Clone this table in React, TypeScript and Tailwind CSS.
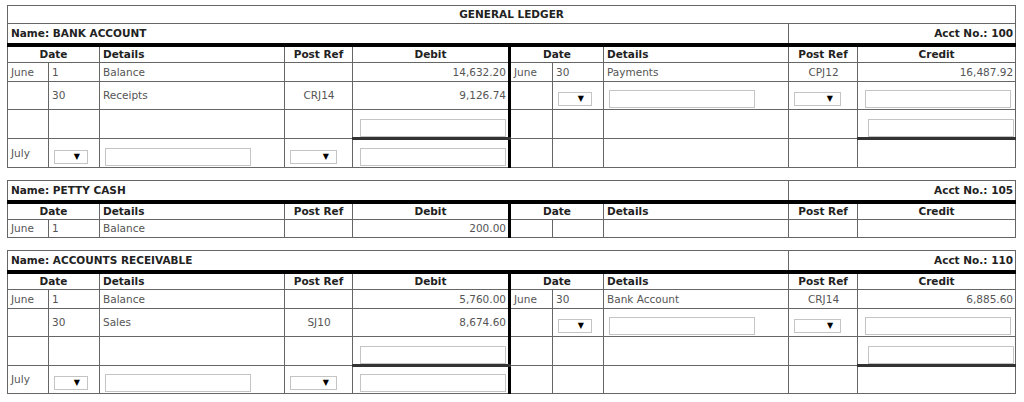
import React from "react";

type Cell = string | { kind: "sel"; wide?: boolean } | { kind: "inp"; thick?: boolean; shift?: boolean };

type Row = { h: string; cells: Cell[] };

type Ledger = { title?: string; name: string; acct: string; rows: Row[] };

const SEL: Cell = { kind: "sel" };
const SELW: Cell = { kind: "sel", wide: true };
const INP: Cell = { kind: "inp" };

const ledgers: Ledger[] = [
  {
    title: "GENERAL LEDGER",
    name: "BANK ACCOUNT",
    acct: "100",
    rows: [
      { h: "h-[19px]", cells: ["June", "1", "Balance", "", "14,632.20", "June", "30", "Payments", "CPJ12", "16,487.92"] },
      { h: "h-[28px]", cells: ["", "30", "Receipts", "CRJ14", "9,126.74", "", SEL, INP, SELW, INP] },
      { h: "h-[29px]", cells: ["", "", "", "", { kind: "inp", thick: true }, "", "", "", "", { kind: "inp", thick: true, shift: true }] },
      { h: "h-[29px]", cells: ["July", SEL, INP, SELW, INP, "", "", "", "", ""] },
    ],
  },
  {
    name: "PETTY CASH",
    acct: "105",
    rows: [{ h: "h-[18px]", cells: ["June", "1", "Balance", "", "200.00", "", "", "", "", ""] }],
  },
  {
    name: "ACCOUNTS RECEIVABLE",
    acct: "110",
    rows: [
      { h: "h-[19px]", cells: ["June", "1", "Balance", "", "5,760.00", "June", "30", "Bank Account", "CRJ14", "6,885.60"] },
      { h: "h-[28px]", cells: ["", "30", "Sales", "SJ10", "8,674.60", "", SEL, INP, SELW, INP] },
      { h: "h-[29px]", cells: ["", "", "", "", { kind: "inp", thick: true }, "", "", "", "", { kind: "inp", thick: true, shift: true }] },
      { h: "h-[28px]", cells: ["July", SEL, INP, SELW, INP, "", "", "", "", ""] },
    ],
  },
];

// column alignment: date, day, details, post ref, amount (both halves)
const align = ["text-left", "text-left", "text-left", "text-center", "text-right"];

function Select({ wide }: { wide?: boolean }) {
  return (
    <span
      className={`ml-[2px] inline-flex h-[14px] items-center justify-end border border-[#c4c4c4] bg-white pr-[7px] text-[8px] leading-none text-black ${
        wide ? "w-[47px]" : "w-[34px]"
      }`}
    >
      ▼
    </span>
  );
}

function Input({ col, shift }: { col: number; shift?: boolean }) {
  const amount = col === 4;
  return (
    <input
      readOnly
      className={`block h-[18px] border border-[#c4c4c4] bg-white ${
        amount ? (shift ? "ml-[7px] w-[146px]" : "ml-[4px] w-[146px]") : "ml-[2px] w-[146px]"
      }`}
    />
  );
}

function LedgerTable({ ledger }: { ledger: Ledger }) {
  const bd = "border border-[#666]";
  return (
    <table className="w-[1008px] table-fixed border-collapse border border-[#888] text-[10.5px]">
      <colgroup>
        <col className="w-[41px]" />
        <col className="w-[51px]" />
        <col className="w-[185px]" />
        <col className="w-[68px]" />
        <col className="w-[157px]" />
        <col className="w-[43px]" />
        <col className="w-[51px]" />
        <col className="w-[185px]" />
        <col className="w-[69px]" />
        <col className="w-[158px]" />
      </colgroup>
      <tbody>
        {ledger.title && (
          <tr className="h-[18px]">
            <td colSpan={10} className={`${bd} text-center font-bold text-[#222]`}>
              {ledger.title}
            </td>
          </tr>
        )}
        <tr className="h-[21px]">
          <td colSpan={8} className={`${bd} border-b-[4px] border-b-black px-[3px] font-bold text-[#222]`}>
            Name: {ledger.name}
          </td>
          <td colSpan={2} className={`${bd} border-b-[4px] border-b-black px-[2px] text-right font-bold text-[#222]`}>
            Acct No.: {ledger.acct}
          </td>
        </tr>
        <tr className="h-[18px] font-bold text-[#222]">
          <td colSpan={2} className={`${bd} text-center`}>Date</td>
          <td className={`${bd} px-[3px]`}>Details</td>
          <td className={`${bd} text-center`}>Post Ref</td>
          <td className={`${bd} text-center`}>Debit</td>
          <td colSpan={2} className={`${bd} border-l-[3px] border-l-black text-center`}>Date</td>
          <td className={`${bd} px-[3px]`}>Details</td>
          <td className={`${bd} text-center`}>Post Ref</td>
          <td className={`${bd} text-center`}>Credit</td>
        </tr>
        {ledger.rows.map((row, ri) => (
          <tr key={ri} className={row.h}>
            {row.cells.map((c, ci) => {
              const col = ci % 5;
              const divider = ci === 5 ? "border-l-[3px] border-l-black" : "";
              if (typeof c === "string") {
                return (
                  <td key={ci} className={`${bd} ${divider} ${align[col]} px-[3px] pr-[2px] align-middle text-[#555]`}>
                    {c}
                  </td>
                );
              }
              if (c.kind === "sel") {
                return (
                  <td key={ci} className={`${bd} ${divider} px-[3px] pb-[3px] align-bottom`}>
                    <Select wide={c.wide} />
                  </td>
                );
              }
              return (
                <td
                  key={ci}
                  className={`${bd} ${divider} px-[3px] align-bottom ${
                    c.thick ? "border-b-[3px] border-b-[#333] pb-0" : "pb-[1px]"
                  }`}
                >
                  <Input col={col} shift={c.shift} />
                </td>
              );
            })}
          </tr>
        ))}
      </tbody>
    </table>
  );
}

export default function App() {
  return (
    <div className="min-h-[402px] w-[1024px] bg-white pl-[7px] pt-[5px] font-['DejaVu_Sans',Verdana,sans-serif] leading-[13px]">
      <div className="flex flex-col gap-[12px]">
        {ledgers.map((l) => (
          <LedgerTable key={l.name} ledger={l} />
        ))}
      </div>
    </div>
  );
}
